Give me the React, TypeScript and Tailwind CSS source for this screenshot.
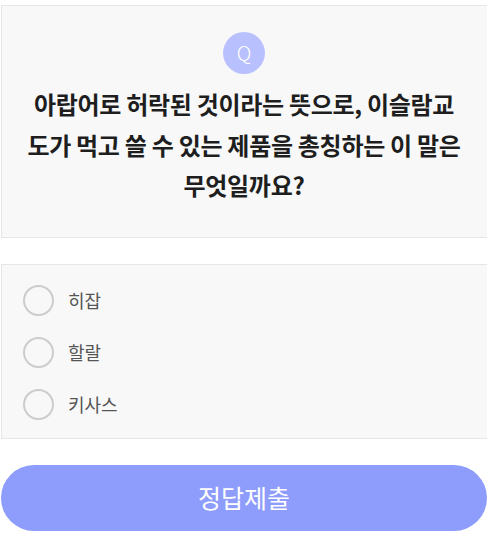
export default function App() {
  const options = ["히잡", "할랄", "키사스"];
  return (
    <div
      className="w-[487px] h-[549px] overflow-hidden bg-white"
      style={{ fontFamily: '"Noto Sans CJK KR", "Noto Sans", sans-serif' }}
    >
      <div className="pt-[5px] pl-[1px]">
        <div className="w-[490px] border border-[#e6e6e6] bg-[#f8f8f8] pt-[26px] pb-[31px]">
          <div className="w-[484px] flex flex-col items-center">
            <div className="w-[42px] h-[42px] rounded-full bg-[#b9c0fe] flex items-center justify-center text-white text-[20px] font-light leading-none">
              Q
            </div>
            <div className="mt-[10px] w-full text-center font-bold text-[24px] leading-[40.5px] text-[#1e1e1e] tracking-[-0.3px]">
              아랍어로 허락된 것이라는 뜻으로, 이슬람교
              <br />
              도가 먹고 쓸 수 있는 제품을 총칭하는 이 말은
              <br />
              무엇일까요?
            </div>
          </div>
        </div>
        <div className="mt-[26px] w-[490px] border border-[#e6e6e6] bg-[#f8f8f8] pt-[10px] pb-[7px] pl-[21px]">
          {options.map((o) => (
            <div key={o} className="h-[52px] flex items-center">
              <div className="w-[31px] h-[31px] rounded-full border-2 border-[#cccccc] bg-[#f8f8f8]" />
              <span className="ml-[14px] text-[18px] text-[#555555]">{o}</span>
            </div>
          ))}
        </div>
        <div className="mt-[26px] w-[486px] h-[66px] rounded-full bg-[#8e9dfc] flex items-center justify-center text-white text-[25px]">
          정답제출
        </div>
      </div>
    </div>
  );
}
